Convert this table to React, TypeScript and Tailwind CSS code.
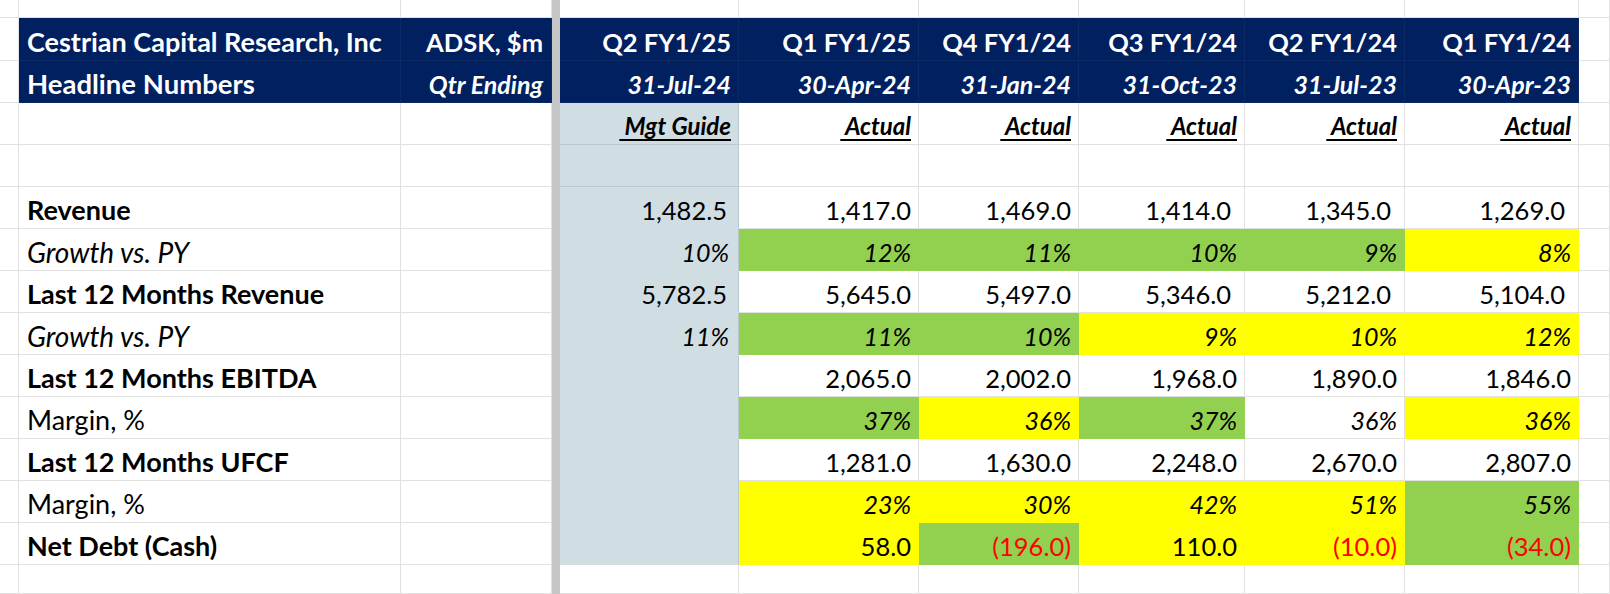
import React from 'react';

const W = [
  'w-[19px]',
  'w-[382px]',
  'w-[151px]',
  'w-[8px]',
  'w-[179px]',
  'w-[180px]',
  'w-[160px]',
  'w-[166px]',
  'w-[160px]',
  'w-[174px]',
  'flex-1',
];

type Fill = 'g' | 'y' | 'w';
type V = { t: string; f?: Fill; r?: boolean };
type RowSpec = { label: string; ls: 'b' | 'i' | 'n'; vi?: boolean; rp?: boolean; mgt: string; vals: V[] };

const FILL: Record<Fill, string> = {
  g: 'bg-[#92D050] border-[#92D050]',
  y: 'bg-[#FFFF00] border-[#FFFF00]',
  w: 'bg-white border-[#E1E1E1]',
};

const rows: RowSpec[] = [
  { label: 'Revenue', ls: 'b', rp: true, mgt: '1,482.5', vals: [{ t: '1,417.0' }, { t: '1,469.0' }, { t: '1,414.0' }, { t: '1,345.0' }, { t: '1,269.0' }] },
  { label: 'Growth vs. PY', ls: 'i', vi: true, mgt: '10%', vals: [{ t: '12%', f: 'g' }, { t: '11%', f: 'g' }, { t: '10%', f: 'g' }, { t: '9%', f: 'g' }, { t: '8%', f: 'y' }] },
  { label: 'Last 12 Months Revenue', ls: 'b', rp: true, mgt: '5,782.5', vals: [{ t: '5,645.0' }, { t: '5,497.0' }, { t: '5,346.0' }, { t: '5,212.0' }, { t: '5,104.0' }] },
  { label: 'Growth vs. PY', ls: 'i', vi: true, mgt: '11%', vals: [{ t: '11%', f: 'g' }, { t: '10%', f: 'g' }, { t: '9%', f: 'y' }, { t: '10%', f: 'y' }, { t: '12%', f: 'y' }] },
  { label: 'Last 12 Months EBITDA', ls: 'b', mgt: '', vals: [{ t: '2,065.0' }, { t: '2,002.0' }, { t: '1,968.0' }, { t: '1,890.0' }, { t: '1,846.0' }] },
  { label: 'Margin, %', ls: 'n', vi: true, mgt: '', vals: [{ t: '37%', f: 'g' }, { t: '36%', f: 'y' }, { t: '37%', f: 'g' }, { t: '36%' }, { t: '36%', f: 'y' }] },
  { label: 'Last 12 Months UFCF', ls: 'b', mgt: '', vals: [{ t: '1,281.0' }, { t: '1,630.0' }, { t: '2,248.0' }, { t: '2,670.0' }, { t: '2,807.0' }] },
  { label: 'Margin, %', ls: 'n', vi: true, mgt: '', vals: [{ t: '23%', f: 'y' }, { t: '30%', f: 'y' }, { t: '42%', f: 'y' }, { t: '51%', f: 'y' }, { t: '55%', f: 'g' }] },
  { label: 'Net Debt (Cash)', ls: 'b', mgt: '', vals: [{ t: '58.0', f: 'y' }, { t: '(196.0)', f: 'g', r: true }, { t: '110.0', f: 'y' }, { t: '(10.0)', f: 'y', r: true }, { t: '(34.0)', f: 'g', r: true }] },
];

const base = 'shrink-0 h-full flex items-end pb-[6px] border-r border-b whitespace-pre';
const white = 'bg-white border-[#E1E1E1]';
const navy = 'bg-[#002060] border-[#0D2A63] text-white font-bold';
const divider = 'w-[8px] shrink-0 h-full bg-[#C6C6C6]';

function Blank({ i }: { i: number }) {
  return <div className={`${W[i]} ${base} ${white}`} />;
}

function EdgeRow({ h }: { h: string }) {
  return (
    <div className={`flex ${h}`}>
      <Blank i={0} />
      <Blank i={1} />
      <Blank i={2} />
      <div className={divider} />
      {[4, 5, 6, 7, 8, 9].map((i) => (
        <Blank key={i} i={i} />
      ))}
      <Blank i={10} />
    </div>
  );
}

const hdr1 = ['Q2 FY1/25', 'Q1 FY1/25', 'Q4 FY1/24', 'Q3 FY1/24', 'Q2 FY1/24', 'Q1 FY1/24'];
const hdr2 = ['31-Jul-24', '30-Apr-24', '31-Jan-24', '31-Oct-23', '31-Jul-23', '30-Apr-23'];

export default function App() {
  return (
    <div className="w-[1610px] h-[594px] overflow-hidden bg-white font-[family-name:Lato,sans-serif] text-[24px] leading-[24px] text-black">
      <EdgeRow h="h-[18px]" />

      {/* header row 1 */}
      <div className="flex h-[43px]">
        <Blank i={0} />
        <div className={`${W[1]} ${base} ${navy} pl-[8px] text-[27px]`}>Cestrian Capital Research, Inc</div>
        <div className={`${W[2]} ${base} ${navy} justify-end pr-[8px] text-[25.5px]`}>ADSK, $m</div>
        <div className={divider} />
        {hdr1.map((t, k) => (
          <div key={k} className={`${W[k + 4]} ${base} ${navy} justify-end pr-[7px] text-[25.5px]`}>
            {t}
          </div>
        ))}
        <Blank i={10} />
      </div>

      {/* header row 2 */}
      <div className="flex h-[42px]">
        <Blank i={0} />
        <div className={`${W[1]} ${base} ${navy} pl-[8px] text-[27.5px]`}>Headline Numbers</div>
        <div className={`${W[2]} ${base} ${navy} italic justify-end pr-[8px] text-[25px]`}>Qtr Ending</div>
        <div className={divider} />
        {hdr2.map((t, k) => (
          <div key={k} className={`${W[k + 4]} ${base} ${navy} italic justify-end pr-[7px] text-[25px]`}>
            {t}
          </div>
        ))}
        <Blank i={10} />
      </div>

      {/* Mgt Guide / Actual */}
      <div className="flex h-[42px]">
        <Blank i={0} />
        <Blank i={1} />
        <Blank i={2} />
        <div className={divider} />
        <div className={`${W[4]} ${base} bg-[#D0DEE3] border-[#B9CACF] justify-end pr-[7px] font-bold italic`}>
          <span className="underline decoration-2 underline-offset-[4px]"> Mgt Guide</span>
        </div>
        {[5, 6, 7, 8, 9].map((i) => (
          <div key={i} className={`${W[i]} ${base} ${white} justify-end pr-[7px] font-bold italic`}>
            <span className="underline decoration-2 underline-offset-[4px]"> Actual</span>
          </div>
        ))}
        <Blank i={10} />
      </div>

      {/* empty row */}
      <div className="flex h-[42px]">
        <Blank i={0} />
        <Blank i={1} />
        <Blank i={2} />
        <div className={divider} />
        <div className={`${W[4]} ${base} bg-[#D0DEE3] border-[#B9CACF]`} />
        {[5, 6, 7, 8, 9].map((i) => (
          <Blank key={i} i={i} />
        ))}
        <Blank i={10} />
      </div>

      {rows.map((r, ri) => (
        <div key={ri} className="flex h-[42px]">
          <Blank i={0} />
          <div
            className={`${W[1]} ${base} ${white} pl-[8px] ${r.ls === 'b' ? 'font-bold text-[27px]' : ''} ${r.ls === 'i' ? 'italic text-[28px]' : ''} ${r.ls === 'n' ? 'text-[27px]' : ''}`}
          >
            {r.label}
          </div>
          <Blank i={2} />
          <div className={divider} />
          <div
            className={`${W[4]} ${base} bg-[#D0DEE3] border-b-[#D0DEE3] border-r-[#B9CACF] justify-end ${r.vi ? 'italic text-[25px] pr-[9px]' : 'text-[25.5px] pr-[11px]'}`}
          >
            {r.mgt}
          </div>
          {r.vals.map((v, k) => (
            <div
              key={k}
              className={`${W[k + 5]} ${base} ${FILL[v.f ?? 'w']} justify-end ${r.rp && k >= 2 ? 'pr-[13px]' : 'pr-[7px]'} ${r.vi ? 'italic text-[25px]' : 'text-[25.5px]'} ${v.r ? 'text-[#FF0000]' : ''}`}
            >
              {v.t}
            </div>
          ))}
          <Blank i={10} />
        </div>
      ))}

      <EdgeRow h="h-[29px]" />
    </div>
  );
}
